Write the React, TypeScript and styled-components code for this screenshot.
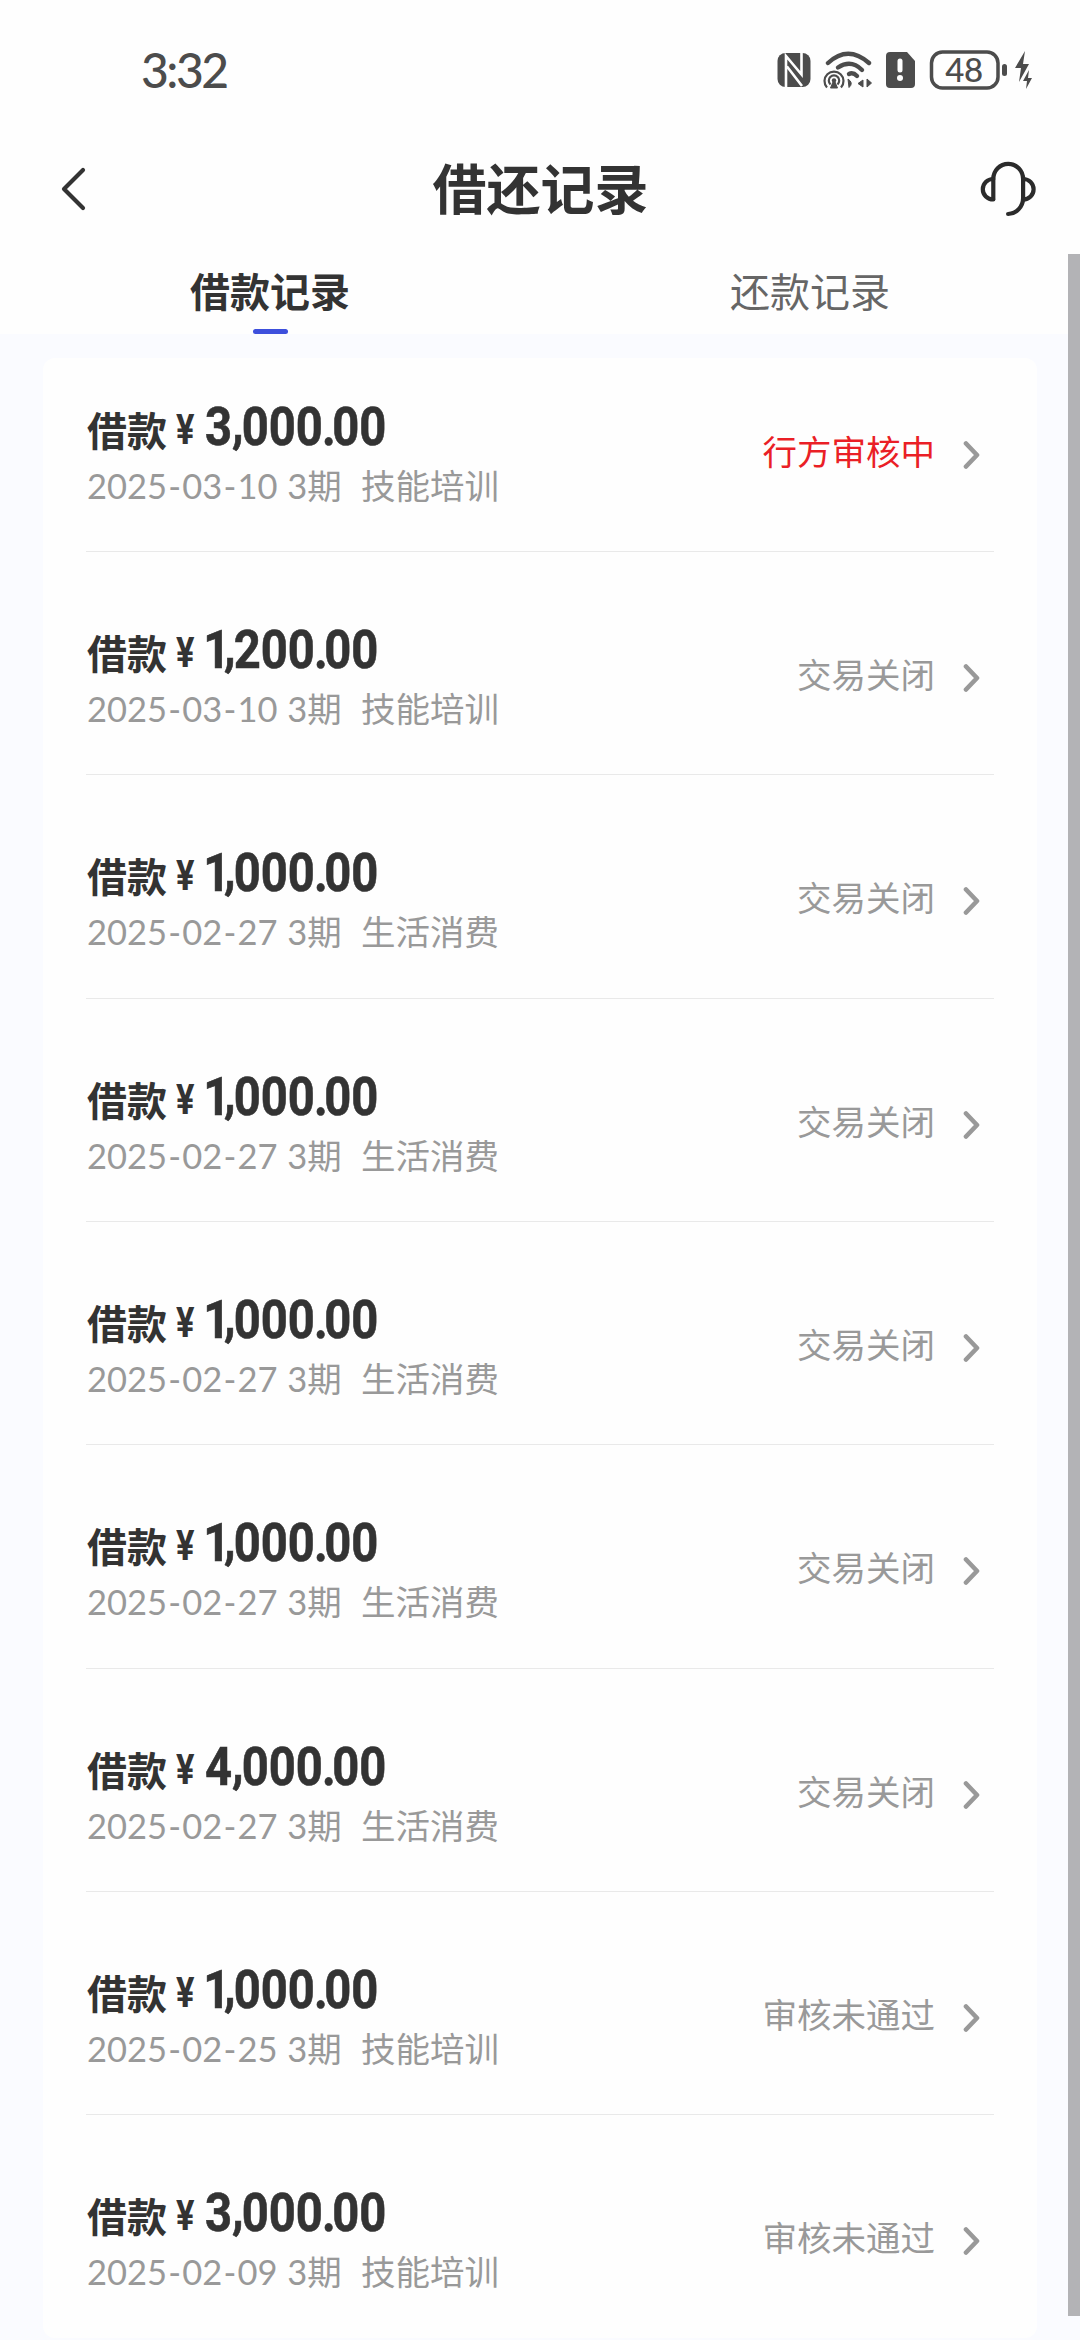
import React from "react";
import styled, { createGlobalStyle } from "styled-components";

const GlobalStyle = createGlobalStyle`
  * { box-sizing: border-box; }
  html, body { margin: 0; padding: 0; background: #fafbff; }
  body { font-family: Lato, "Noto Sans CJK SC", sans-serif; color: #333; overflow: hidden; }
  p, h1 { margin: 0; }
`;

const Screen = styled.div`
  position: relative;
  width: 1080px;
  height: 2340px;
  overflow: hidden;
  background: #fafbff;
`;

const Top = styled.header`
  height: 334px;
  background: #fefefe;
`;

const StatusBar = styled.div`
  height: 140px;
  padding: 0 46px 0 141px;
  display: flex;
  justify-content: space-between;
  align-items: center;
`;

const Clock = styled.span`
  font: 500 48px/60px Lato, sans-serif;
  letter-spacing: -2.5px;
  color: #4c4c4c;
`;

const StatusIcons = styled.svg`
  display: block;
`;

const TitleBar = styled.div`
  height: 100px;
  padding: 0 43px 3px 60px;
  display: flex;
  justify-content: space-between;
  align-items: center;
`;

const Title = styled.h1`
  font: 700 54px/80px "Noto Sans CJK SC", sans-serif;
  margin: 0 0 3px 14px;
`;

const Tabs = styled.nav`
  display: flex;
  height: 94px;
`;

const Tab = styled.div<{ $active?: boolean }>`
  flex: 1;
  display: flex;
  flex-direction: column;
  align-items: center;
  padding-top: 20px;
  font: ${(p) => (p.$active ? 700 : 400)} 40px/60px "Noto Sans CJK SC", sans-serif;
  color: ${(p) => (p.$active ? "#333" : "#666")};
`;

const TabLine = styled.span`
  width: 35px;
  height: 6px;
  margin-top: 9px;
  border-radius: 3px;
  background: #3d4fdc;
`;

const Card = styled.main`
  margin: 24px 43px 0 43px;
  width: 994px;
  height: 1980px;
  padding: 0 43px;
  border-radius: 12px;
  background: #fefefe;
  overflow: hidden;
`;

const List = styled.div`
  margin-top: -29.5px;
`;

const Row = styled.article`
  height: 223.35px;
  padding: 69px 14px 0 1px;
  display: flex;
  justify-content: space-between;
  border-bottom: 1px solid #e9e9e9;
  &:last-child { border-bottom-color: transparent; }
`;

const AmountLine = styled.p`
  display: flex;
  align-items: flex-start;
  height: 62px;
  padding-top: 1px;
  font: 700 40px/60px "Noto Sans CJK SC", sans-serif;
`;

const Yen = styled.span`
  font: 700 42px/60px Roboto, sans-serif;
  display: inline-block;
  width: 29px;
  margin: 1px 0 0 9px;
  transform: scaleX(0.82);
  transform-origin: left;
`;

const Amount = styled.span`
  font: 700 53px/60px Roboto, sans-serif;
  display: inline-block;
  margin-top: -2px;
  transform: scaleX(0.89);
  transform-origin: left;
  -webkit-text-stroke: 0.6px #333;
`;

const Glyph = styled.span<{ $before: number; $after: number; $raise: number }>`
  margin-left: ${(p) => p.$before}px;
  letter-spacing: ${(p) => p.$after}px;
  vertical-align: ${(p) => p.$raise}px;
  line-height: 0;
`;

const Detail = styled.p`
  font: 400 34.5px/52px Lato, "Noto Sans CJK SC", sans-serif;
  color: #999;
  white-space: pre;
  word-spacing: 0.8px;
`;

const Dash = styled.span`
  margin: 0 1.2px;
`;

const State = styled.div<{ $pending: boolean }>`
  display: flex;
  align-items: flex-start;
  gap: 28px;
  height: 52px;
  margin-top: 26px;
  font: 400 34.5px/52px "Noto Sans CJK SC", sans-serif;
  color: ${(p) => (p.$pending ? "#ea1f26" : "#999")};
`;

const ChevronIcon = styled.svg`
  display: block;
  margin-top: 16px;
`;

const ScrollThumb = styled.div`
  position: absolute;
  right: 0;
  top: 254px;
  width: 12px;
  height: 2062px;
  background: #b3b3b6;
`;

type LoanRecord = { amount: string; date: string; use: string; state: string; pending?: boolean };

const records: LoanRecord[] = [
  { amount: "3,000.00", date: "2025-03-10", use: "技能培训", state: "行方审核中", pending: true },
  { amount: "1,200.00", date: "2025-03-10", use: "技能培训", state: "交易关闭" },
  { amount: "1,000.00", date: "2025-02-27", use: "生活消费", state: "交易关闭" },
  { amount: "1,000.00", date: "2025-02-27", use: "生活消费", state: "交易关闭" },
  { amount: "1,000.00", date: "2025-02-27", use: "生活消费", state: "交易关闭" },
  { amount: "1,000.00", date: "2025-02-27", use: "生活消费", state: "交易关闭" },
  { amount: "4,000.00", date: "2025-02-27", use: "生活消费", state: "交易关闭" },
  { amount: "1,000.00", date: "2025-02-25", use: "技能培训", state: "审核未通过" },
  { amount: "3,000.00", date: "2025-02-09", use: "技能培训", state: "审核未通过" },
];

// Space before, space after and rise of the narrow glyphs of an amount.
const bearings: Record<string, [number, number, number]> = {
  "1": [-2, -7, 0],
  ",": [0, -2.2, 4],
  ".": [-1, -4, 0],
};

const Money = ({ value }: { value: string }) => (
  <Amount>
    {value.split(/([1,.])/).filter(Boolean).map((part, i) =>
      bearings[part] ? (
        <Glyph key={i} $before={bearings[part][0]} $after={bearings[part][1]} $raise={bearings[part][2]}>{part}</Glyph>
      ) : (
        part
      )
    )}
  </Amount>
);

const LoanDate = ({ value }: { value: string }) => {
  const [year, month, day] = value.split("-");
  return (
    <>
      {year}<Dash>-</Dash>{month}<Dash>-</Dash>{day}
    </>
  );
};

const SystemIcons = () => (
  <StatusIcons width="258" height="44" viewBox="776 47 258 44" fill="#4c4c4c">
    <rect x="777.5" y="52" width="33" height="34" rx="8" />
    <path d="M786 87V55L801.500 73.500V51M787 65.500L802 85" fill="none" stroke="#fefefe" strokeWidth="2.600" />
    <g fill="none" stroke="#4c4c4c" strokeWidth="4.4" strokeLinecap="round">
      <path d="M828 62Q848 43.500 869 62" />
      <path d="M838 66.500Q851 58 862 69" />
      <path d="M849 73Q853 71 857 75" />
    </g>
    <g fill="none" stroke="#4c4c4c" strokeWidth="2.200">
      <path d="M827 86.500A9.500 9.500 0 1 1 841 86.500" />
      <path d="M830.500 83.500A5.200 5.200 0 1 1 837.500 83.500" />
    </g>
    <circle cx="834" cy="79.500" r="2.200" />
    <path d="M833 81h2l2.500 6h-7zM848 78q6 4 1 8.500zM863 79v7l-5-3.500zM867 78v8l4.500-4z" stroke="#4c4c4c" strokeWidth="1" />
    <path d="M890 51h17l8 9v23q0 4-4 4h-21q-4 0-4-4V55q0-4 4-4Z" />
    <path d="M900 60v9" stroke="#fefefe" strokeWidth="5" strokeLinecap="round" />
    <circle cx="900" cy="77" r="3" fill="#fefefe" />
    <rect x="931.500" y="51" width="66.500" height="36" rx="11" fill="none" stroke="#4c4c4c" strokeWidth="3.500" />
    <text x="964" y="81" textAnchor="middle" fontFamily="Lato, sans-serif" fontSize="33" fontWeight="500" letterSpacing="-0.5">48</text>
    <rect x="1002" y="63" width="5" height="12" rx="2.500" />
    <path d="M1025 50L1015 67h6l-2 14 10-18h-6zM1029 69l-6 11h4l-1 8 6-11h-4z" />
  </StatusIcons>
);

const BackIcon = () => (
  <svg width="28" height="46" viewBox="0 0 28 46" fill="none" stroke="#333" strokeWidth="4.200" strokeLinecap="round" strokeLinejoin="round">
    <path d="M23 4L4 23L23 42" />
  </svg>
);

const HeadsetIcon = () => (
  <svg width="58" height="58" viewBox="979 159 58 58" fill="none" stroke="#2b2b2b" strokeWidth="4.200" strokeLinecap="round" strokeLinejoin="round">
    <path d="M993.300 198V178a14.900 15.200 0 0 1 29.800 0V197a15.500 16 0 0 1-15 16" />
    <path d="M993.300 178c-6 0-10.500 4.500-10.500 10.200s4.500 10.300 10.500 10.300" />
    <path d="M1023.100 178c6 0 10.500 4.500 10.500 10.200s-4.500 10.300-10.500 10.300" />
  </svg>
);

const Chevron = () => (
  <ChevronIcon width="17" height="30" viewBox="0 0 17 30" fill="none" stroke="#999" strokeWidth="4.600" strokeLinecap="round" strokeLinejoin="round">
    <path d="M3 3.500L14 15L3 26.500" />
  </ChevronIcon>
);

export default function App() {
  return (
    <>
      <GlobalStyle />
      <Screen>
        <Top>
          <StatusBar>
            <Clock>3:32</Clock>
            <SystemIcons />
          </StatusBar>
          <TitleBar>
            <BackIcon />
            <Title>借还记录</Title>
            <HeadsetIcon />
          </TitleBar>
          <Tabs>
            <Tab $active>
              借款记录
              <TabLine />
            </Tab>
            <Tab>还款记录</Tab>
          </Tabs>
        </Top>
        <Card>
          <List>
            {records.map((r, i) => (
              <Row key={i}>
                <div>
                  <AmountLine>
                    借款
                    <Yen>¥</Yen>
                    <Money value={r.amount} />
                  </AmountLine>
                  <Detail>
                    <LoanDate value={r.date} />
                    {` 3期  ${r.use}`}
                  </Detail>
                </div>
                <State $pending={!!r.pending}>
                  {r.state}
                  <Chevron />
                </State>
              </Row>
            ))}
          </List>
        </Card>
        <ScrollThumb />
      </Screen>
    </>
  );
}
